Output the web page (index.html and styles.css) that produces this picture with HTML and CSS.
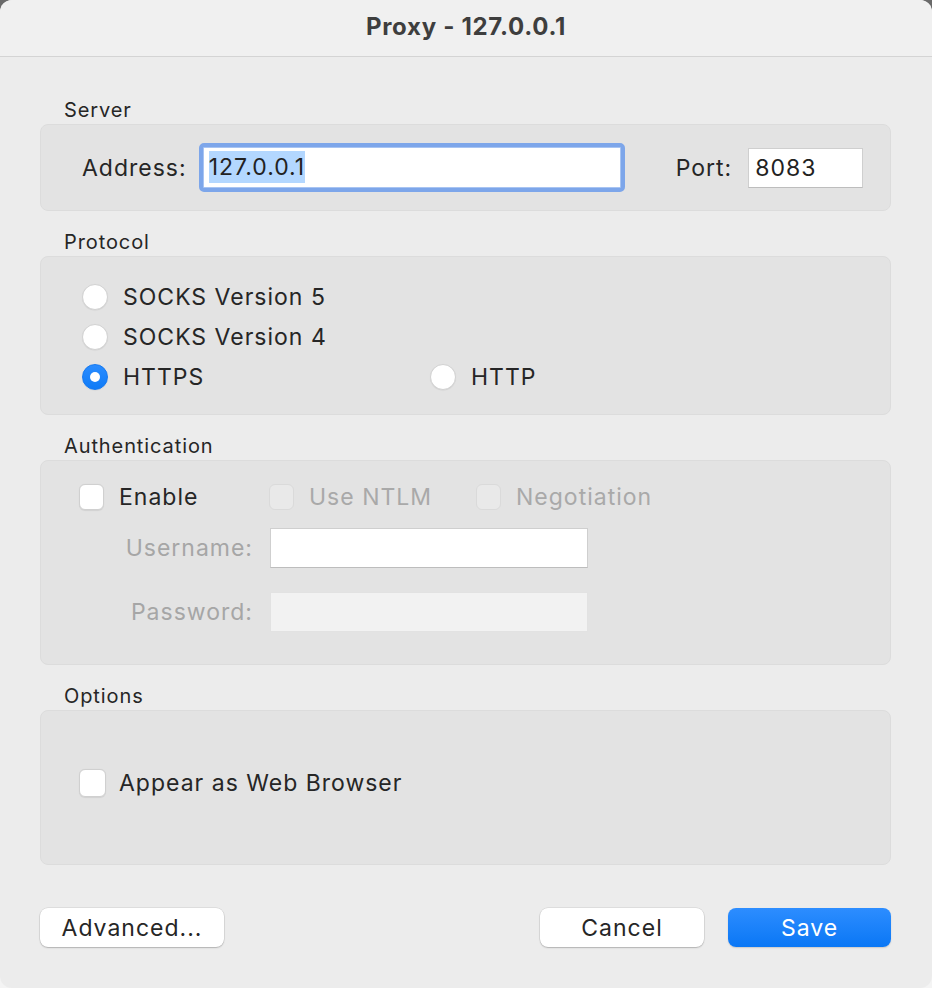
FILE: index.html
```html
<!DOCTYPE html>
<html lang="en">
<head>
    <meta charset="UTF-8">
    <meta name="viewport" content="width=device-width, initial-scale=1.0">
    <title>Proxy - 127.0.0.1</title>
    <link rel="stylesheet" href="styles.css">
</head>
<body>
    <div class="window">
        <div class="titlebar">Proxy - 127.0.0.1</div>

        <div class="content">
            <div class="section-label">Server</div>
            <div class="box server">
                <label class="field-label">Address:</label>
                <div class="focus-ring">
                    <div class="field"><span class="selected">127.0.0.1</span></div>
                </div>
                <label class="field-label port-label">Port:</label>
                <div class="field port">8083</div>
            </div>

            <div class="section-label">Protocol</div>
            <div class="box protocol">
                <div class="choice"><span class="radio"></span>SOCKS Version 5</div>
                <div class="choice"><span class="radio"></span>SOCKS Version 4</div>
                <div class="choice-row">
                    <div class="choice wide"><span class="radio on"></span>HTTPS</div>
                    <div class="choice"><span class="radio"></span>HTTP</div>
                </div>
            </div>

            <div class="section-label">Authentication</div>
            <div class="box auth">
                <div class="check-row">
                    <div class="choice enable"><span class="check"></span>Enable</div>
                    <div class="choice ntlm disabled"><span class="check"></span>Use NTLM</div>
                    <div class="choice disabled"><span class="check"></span>Negotiation</div>
                </div>
                <div class="form-row">
                    <label class="form-label">Username:</label>
                    <div class="field wide-field"></div>
                </div>
                <div class="form-row last">
                    <label class="form-label">Password:</label>
                    <div class="field wide-field off"></div>
                </div>
            </div>

            <div class="section-label">Options</div>
            <div class="box options">
                <div class="choice"><span class="check big"></span>Appear as Web Browser</div>
            </div>

            <div class="buttons">
                <button class="btn advanced">Advanced...</button>
                <div class="spacer"></div>
                <button class="btn cancel">Cancel</button>
                <button class="btn primary">Save</button>
            </div>
        </div>
    </div>
</body>
</html>
```

FILE: styles.css
```css
html, body {
    margin: 0;
    height: 100%;
}

body {
    background: linear-gradient(#6a6a6a, #6a6a6a 50%, #f4f4f4 50%);
    font-family: Inter, "Noto Sans", sans-serif;
    color: #262626;
}

.window {
    height: 988px;
    background: #ececec;
    border-radius: 12px;
    overflow: hidden;
}

.titlebar {
    height: 56px;
    line-height: 54px;
    text-align: center;
    font-size: 24px;
    font-weight: 700;
    color: #3e3e3e;
    background: #f0f0f0;
    border-bottom: 1px solid #d4d4d4;
    letter-spacing: 0.7px;
}

.content {
    padding: 41px 41px 0 40px;
}

.section-label {
    font-size: 20px;
    letter-spacing: 0.9px;
    line-height: 24px;
    padding-left: 24px;
    margin-bottom: 2px;
}

.box {
    background: #e3e3e3;
    border: 1px solid #dcdcdc;
    border-radius: 8px;
    margin-bottom: 19px;
}

/* server */
.server {
    display: flex;
    align-items: center;
    padding: 18px 26px 18px 41px;
}

.field-label {
    font-size: 23px;
    letter-spacing: 1px;
    margin-right: 12px;
}

.port-label {
    margin-left: 51px;
    margin-right: 16px;
}

.focus-ring {
    width: 426px;
    height: 49px;
    box-sizing: border-box;
    border: 4px solid #7da6ea;
    border-radius: 5px;
    padding: 1px;
    background: #a8c4f2;
}

.field {
    height: 38px;
    box-sizing: border-box;
    background: #fff;
    border: 1px solid #cfcfcf;
    border-bottom-color: #bdbdbd;
    font-size: 23px;
    letter-spacing: 1px;
    line-height: 36px;
    padding-left: 6px;
    color: #222;
}

.focus-ring .field {
    height: 39px;
    border: none;
    line-height: 39px;
    padding-left: 5px;
}

.selected {
    background: #b3d7ff;
    padding: 2px 0;
}

.field.port {
    width: 115px;
    height: 40px;
    line-height: 38px;
}

/* protocol */
.protocol {
    padding: 20px 0 17px 41px;
}

.choice {
    display: flex;
    align-items: center;
    height: 40px;
    font-size: 23px;
    letter-spacing: 1px;
}

.choice-row {
    display: flex;
}

.choice.wide {
    width: 348px;
}

.radio {
    width: 26px;
    height: 26px;
    box-sizing: border-box;
    border-radius: 50%;
    background: #fff;
    border: 1px solid #d2d2d2;
    box-shadow: 0 0.5px 1px rgba(0, 0, 0, 0.08);
    margin-right: 15px;
    position: relative;
}

.radio.on {
    background: linear-gradient(#2a8cff, #0f7bf7);
    border-color: #1478f0;
}

.radio.on::after {
    content: "";
    position: absolute;
    left: 7px;
    top: 7px;
    width: 10px;
    height: 10px;
    border-radius: 50%;
    background: #fff;
}

/* authentication */
.auth {
    padding: 16px 0 32px 38px;
}

.check-row {
    display: flex;
    margin-bottom: 11px;
}

.check {
    width: 25px;
    height: 26px;
    box-sizing: border-box;
    background: #fff;
    border: 1px solid #d0d0d0;
    border-radius: 6px;
    box-shadow: 0 0.5px 1px rgba(0, 0, 0, 0.08);
    margin-right: 15px;
}

.check.big {
    width: 27px;
    height: 28px;
    margin-right: 13px;
}

.enable {
    width: 190px;
}

.ntlm {
    width: 207px;
}

.disabled {
    color: #a9a9a9;
}

.disabled .check {
    background: #e9e9e9;
    border-color: #dadada;
    box-shadow: none;
}

.form-row {
    display: flex;
    align-items: center;
    margin-bottom: 24px;
}

.form-row.last {
    margin-bottom: 0;
}

.form-label {
    width: 174px;
    text-align: right;
    font-size: 23px;
    letter-spacing: 1px;
    color: #a6a6a6;
    margin-right: 17px;
}

.wide-field {
    width: 318px;
    height: 40px;
}

.wide-field.off {
    background: #f2f2f2;
    border-color: #e2e2e2;
}

/* options */
.options {
    padding: 52px 0 61px 38px;
}

/* buttons */
.buttons {
    display: flex;
    margin-top: 43px;
}

.spacer {
    flex: 1;
}

.btn {
    height: 39px;
    font-family: Inter, "Noto Sans", sans-serif;
    font-size: 23px;
    letter-spacing: 1px;
    color: #262626;
    background: #fff;
    border: none;
    border-radius: 8px;
    box-shadow: 0 0 0 0.5px rgba(0, 0, 0, 0.12), 0 1px 1.5px rgba(0, 0, 0, 0.2);
    padding: 0;
}

.advanced {
    width: 184px;
}

.cancel {
    width: 164px;
    margin-right: 24px;
}

.primary {
    width: 163px;
    color: #fff;
    background: linear-gradient(#2d8dff, #0a77f5);
    box-shadow: 0 1px 1.5px rgba(0, 0, 0, 0.15);
}
```
